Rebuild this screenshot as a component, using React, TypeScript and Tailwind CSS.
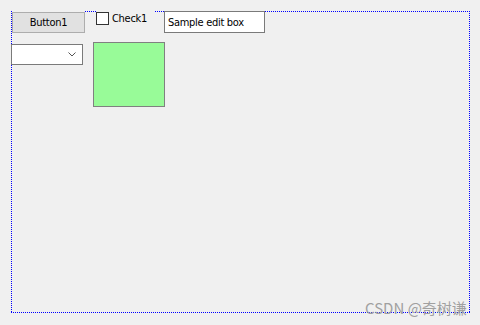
import React from 'react';

function ComboChevron() {
    return (
        <svg width="8" height="5" viewBox="0 0 8 5" fill="none" stroke="#555" strokeWidth={1}>
            <path d="M0.5 0.5 L4 4 L7.5 0.5" />
        </svg>
    );
}

// dotted 1px frame drawn as background stripes so the dots come out as crisp single pixels
const frameDots =
    "[background-image:repeating-linear-gradient(90deg,#0000ff_0_1px,transparent_1px_2px),repeating-linear-gradient(90deg,#0000ff_0_1px,transparent_1px_2px),repeating-linear-gradient(180deg,#0000ff_0_1px,transparent_1px_2px),repeating-linear-gradient(180deg,#0000ff_0_1px,transparent_1px_2px)] [background-size:100%_1px,100%_1px,1px_100%,1px_100%] [background-position:0_0,0_100%,0_0,100%_0] bg-no-repeat";

function App() {
    return (
        <div className="relative w-[480px] h-[325px] bg-[#f0f0f0] pl-[11px] pt-[11px] text-[11px] tracking-[-0.3px] text-black overflow-hidden"
             style={{ fontFamily: '"DejaVu Sans Condensed", "Liberation Sans", sans-serif' }}>
            {/* dialog frame */}
            <div className={`w-[459px] h-[302px] p-px ${frameDots}`}>
                {/* first row sits on the top border */}
                <div className="flex items-start -mt-px">
                    <div className="pt-px bg-[#f0f0f0]">
                        <button className="w-[73px] h-[21px] border border-[#adadad] bg-[#e1e1e1] flex items-center justify-center leading-none">
                            Button1
                        </button>
                    </div>
                    <div className="ml-[11px] w-[59px] h-[16px] pt-px bg-[#f0f0f0] flex items-start gap-[3px]">
                        <div className="w-[13px] h-[13px] border border-[#333333] bg-white shrink-0" />
                        <span className="leading-[13px]">Check1</span>
                    </div>
                    <div className="ml-[9px] w-[101px] h-[22px] border border-[#7a7a7a] bg-white flex items-center pl-[3px] leading-none">
                        Sample edit box
                    </div>
                </div>
                {/* second row */}
                <div className="flex items-start mt-[9px]">
                    <div className="mt-[2px] -ml-px w-[72px] h-[21px] border border-[#7a7a7a] bg-white flex items-center justify-end pr-[6px]">
                        <ComboChevron />
                    </div>
                    <div className="ml-[10px] w-[72px] h-[65px] border border-[#808080] bg-[#98fb98]" />
                </div>
            </div>
            <div className="absolute left-[365px] top-[300px] text-[15px] tracking-normal text-[#a0a0a0] leading-none"
                 style={{ fontFamily: '"Noto Sans CJK SC", sans-serif' }}>
                CSDN @奇树谦
            </div>
        </div>
    );
}

export default App;
